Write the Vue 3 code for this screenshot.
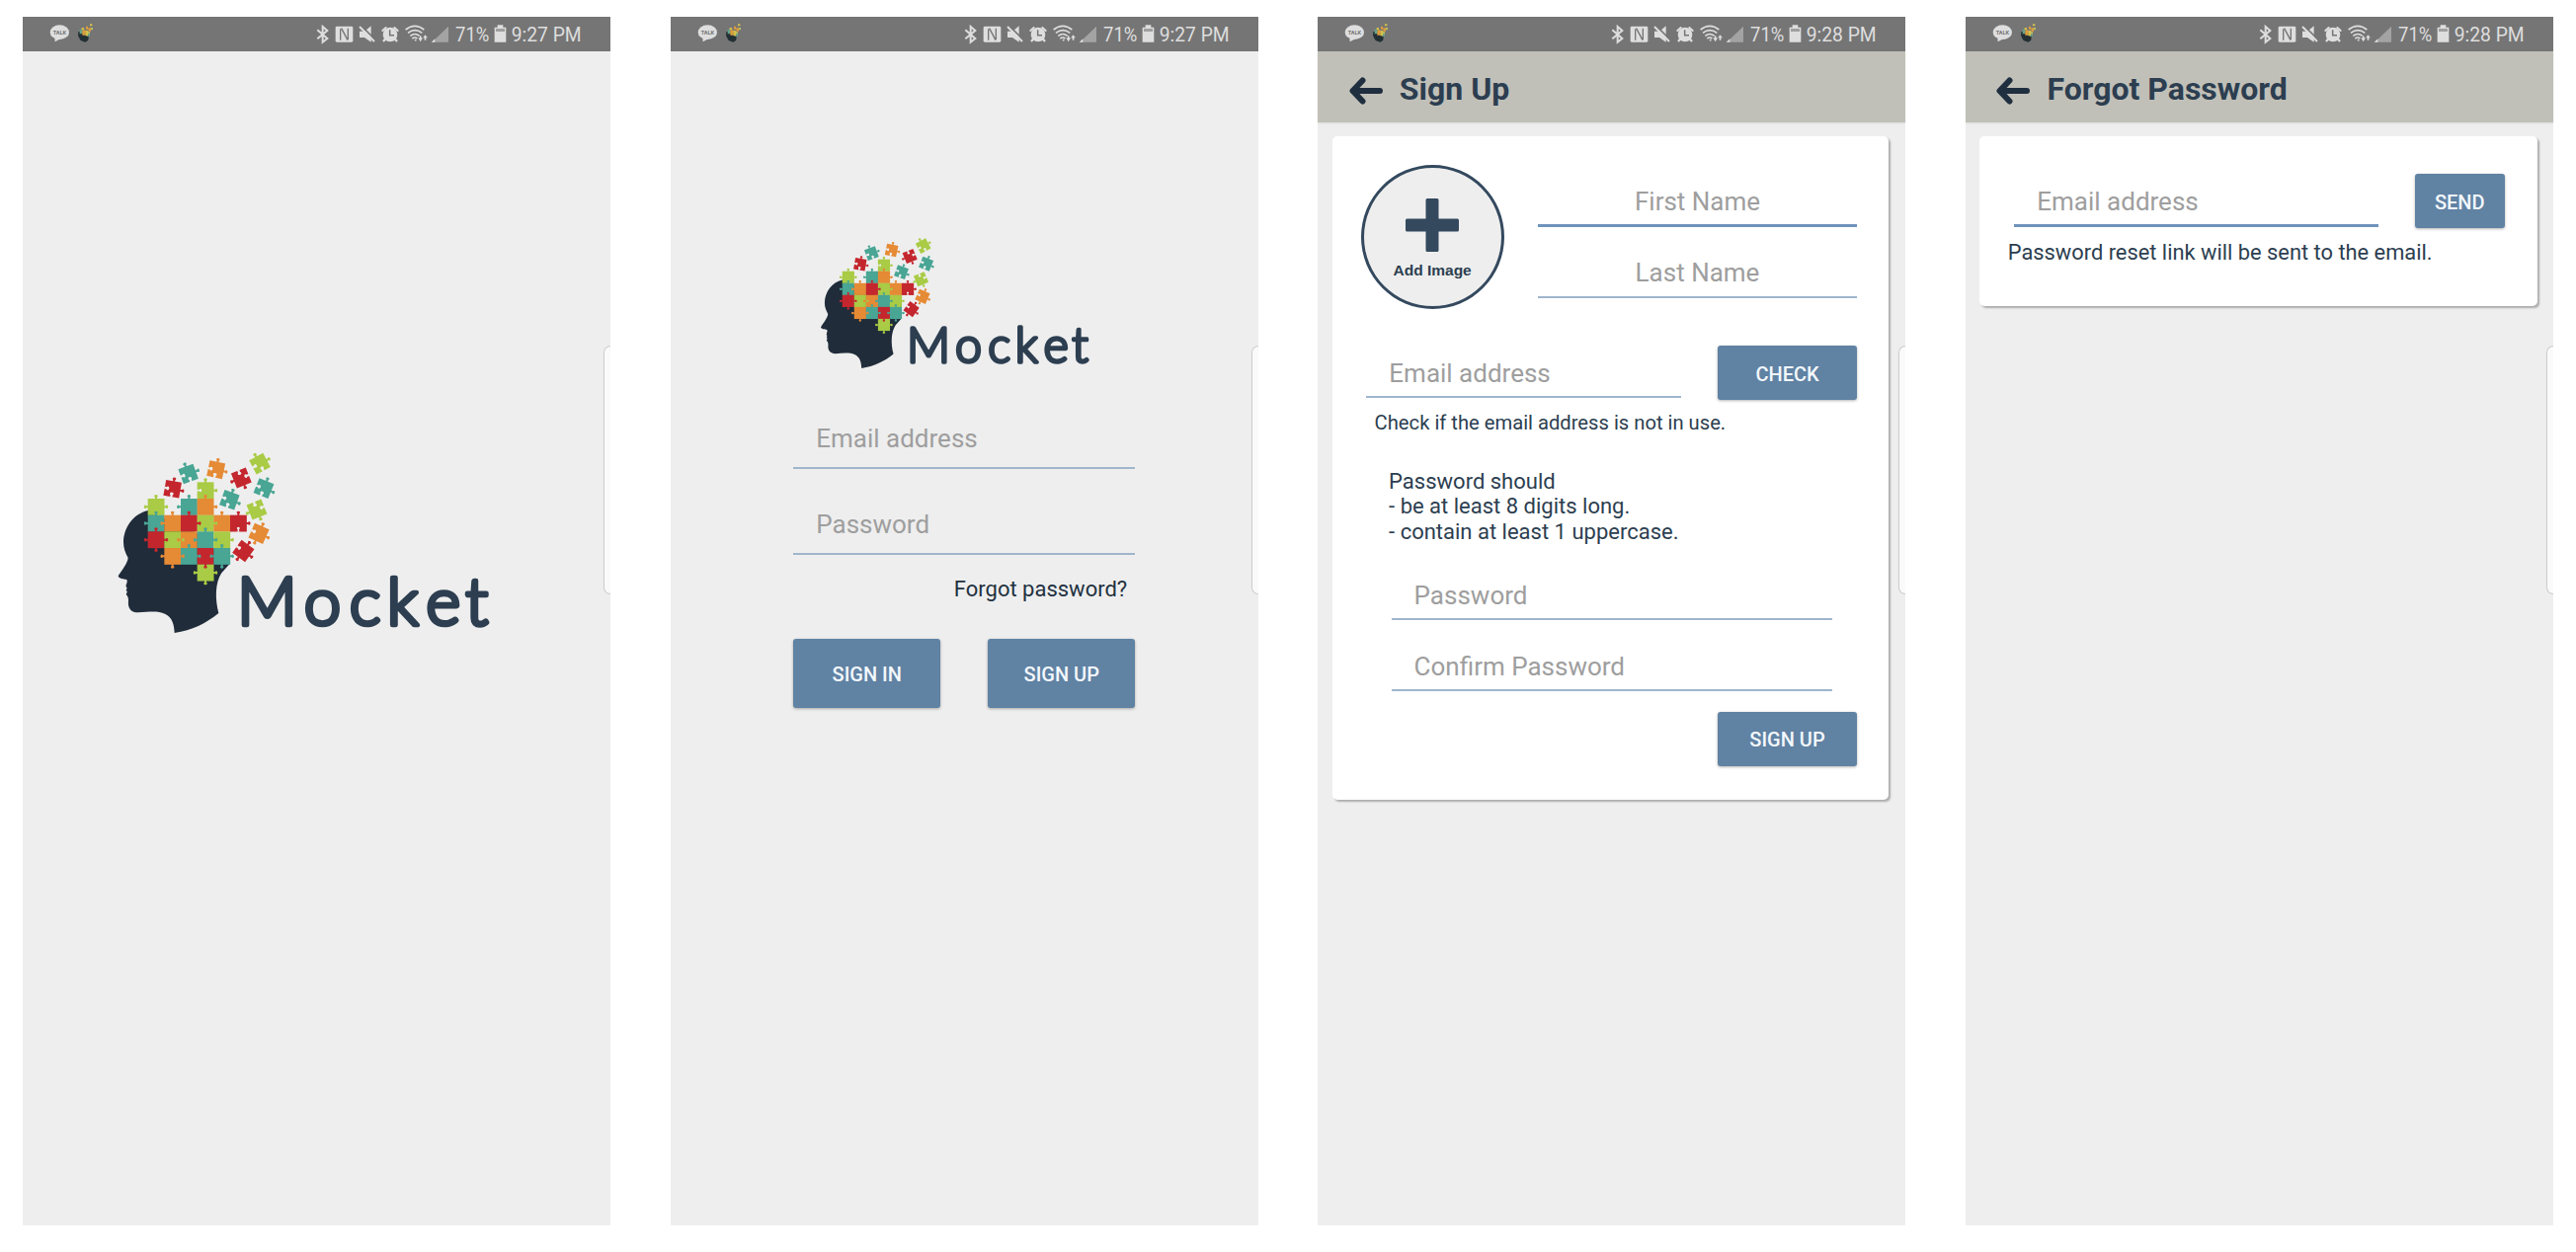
<script setup>
const screens = [
  { id: 'splash', time: '9:27 PM', logo: true },
  { id: 'login', time: '9:27 PM', logo: true },
  { id: 'signup', time: '9:28 PM', title: 'Sign Up' },
  { id: 'forgot', time: '9:28 PM', title: 'Forgot Password' },
]

const T = '#49a594', O = '#e58a35', R = '#c4262e', L = '#a9cb45'

// Interlocked pieces: column, row, colour, sides that carry a knob
const grid = [
  [3, 0, L, 'UR'],
  [0, 1, L, 'ULR'], [2, 1, T, 'UL'], [3, 1, O, 'UR'],
  [0, 2, T, 'UL'], [1, 2, O, 'UL'], [2, 2, R, 'UR'], [3, 2, L, 'R'], [4, 2, O, 'U'], [5, 2, R, 'UR'],
  [0, 3, R, 'ULRD'], [1, 3, L, 'R'], [2, 3, O, 'L'], [3, 3, T, 'ULR'], [4, 3, L, 'R'],
  [1, 4, O, 'LRD'], [2, 4, T, 'UR'], [3, 4, R, 'D'], [4, 4, T, 'ULRD'],
  [3, 5, L, 'LRD'],
]

// Scattered pieces: centre, rotation, colour, knobs; the other sides are notched
const loose = [
  [271, 119, -20, T, 'UR'], [355, 106, 12, O, 'UR'], [432, 131, -22, R, 'LD'],
  [488, 88, -28, L, 'UR'], [223, 165, 10, R, 'UR'], [500, 163, 22, T, 'UR'],
  [396, 198, 20, T, 'UR'], [479, 227, -22, L, 'LD'], [485, 300, 24, O, 'URD'],
  [438, 353, 36, R, 'URD'],
]

const turn = { U: 0, R: 90, D: 180, L: 270 }
const notches = (k) => ['U', 'R', 'D', 'L'].filter((d) => !k.includes(d))
</script>

<template>
  <main class="board">
    <section v-for="s in screens" :key="s.id" class="phone" :class="s.id">
      <svg class="status" width="595" height="35" viewBox="0 0 595 35">
        <g transform="translate(-3 -7) scale(.33333)">
          <ellipse cx="121" cy="68" rx="29" ry="22" fill="#dedede" />
          <path d="M106 84 L107 97 L124 88Z" fill="#dedede" />
          <text x="101" y="75" font-size="17" font-weight="700" fill="#757575" textLength="40" lengthAdjust="spacingAndGlyphs">TALK</text>
          <path d="M178 66 Q175 78 181 86 L185 93 L199 98 L208 92 L209 80 L198 68Z" fill="#222f35" />
          <path d="M182 59h9v14h-9zM204 73h9v7h-9z" fill="#66a287" />
          <path d="M190 61h9v16h-9zM208 55h8v10h-8zM201 50h6v9h-6z" fill="#dc9c3c" />
          <path d="M199 63h8v16h-8zM188 54h7v6h-7zM213 43h7v6h-7z" fill="#d7c04a" />
          <path d="M216 54h6v7h-6zM207 66h6v7h-6z" fill="#b7bd62" />
        </g>
        <g transform="translate(277 -7) scale(.33333)" fill="#dedede">
          <path d="M64 61 L94 87 L80 98 V51 L94 63 L64 88" fill="none" stroke="#dedede" stroke-width="6" />
          <rect x="119" y="50" width="53" height="48" rx="4" />
          <path d="M134 92 V58 M137 56 L156 92 M157 90 V56" fill="none" stroke="#757575" stroke-width="4" />
          <path d="M192 65 H207 L227 49 V98 L207 84 H192Z" />
          <path d="M196 47 L240 91" stroke="#757575" stroke-width="5" />
          <path d="M192 51 L237 96" stroke="#dedede" stroke-width="6" />
          <circle cx="285" cy="75" r="22" />
          <path d="M262 63 L272 54M298 54 L308 63" stroke="#dedede" stroke-width="6" stroke-linecap="round" />
          <path d="M271 88 L264 96M299 88 L306 96" stroke="#dedede" stroke-width="7" />
          <path d="M284 61 V77 H297" fill="none" stroke="#757575" stroke-width="4.5" />
          <g fill="none" stroke="#dedede" stroke-width="5">
            <path d="M332 60 Q360 38 388 60" />
            <path d="M339 70 Q360 54 382 70" />
            <path d="M346 79 Q360 68 374 79" />
            <path d="M352 87 Q360 81 367 87" />
          </g>
          <path d="M370 85h5v-6h4v6h5l-7 12zM385 85l6-9 8 9h-5v7h-5v-7zM358 92l6-4v8z" />
          <path d="M462 50 V98 H412Z" fill="#a3a3a3" />
          <path d="M410 98 L421 88 V98Z" />
          <text x="483" y="97" font-size="63" textLength="103" lengthAdjust="spacingAndGlyphs">71%</text>
          <path d="M611 46h17v7h9v45h-35v-45h9z" />
          <path d="M606 57h27v9h-27z" fill="#a0a0a0" />
          <text x="653" y="97" font-size="63" textLength="213" lengthAdjust="spacingAndGlyphs">{{ s.time }}</text>
        </g>
      </svg>

      <svg v-if="s.logo" class="logo" viewBox="50 50 1140 560">
        <path
          fill="#202c3a"
          d="M148 230 C105 240 75 280 74 326 C74 345 80 358 88 374 C86 392 68 412 58 429 C60 438 74 438 84 440 C88 448 80 456 82 462 C87 465 83 469 82 473 C88 476 84 480 82 485 C92 495 88 505 89 517 C92 534 104 540 118 540 C150 538 180 534 200 544 C222 555 228 575 229 602 C282 594 325 573 363 542 C352 500 352 450 372 420 L397 392 L300 300Z"
        />
        <g transform="translate(148 144)">
          <rect v-for="(p, i) in grid" :key="'b' + i" :x="p[0] * 50" :y="p[1] * 50" width="50.5" height="50.5" :fill="p[2]" />
          <template v-for="(p, i) in grid" :key="'k' + i">
            <g v-for="d in p[3]" :key="d" :fill="p[2]" :transform="`translate(${p[0] * 50 + 25} ${p[1] * 50 + 25}) rotate(${turn[d]})`">
              <path d="M-3 -23 L-3 -29 Q-6 -31 -5 -35 Q0 -39 5 -35 Q6 -31 3 -29 L3 -23Z" />
            </g>
          </template>
          <path fill="#eee" d="M272 151 L273 144 Q269 141 271 138 Q275 134 279 138 Q281 141 277 144 L278 151Z" />
          <path fill="#eee" d="M149 22 L156 23 Q159 19 162 21 Q166 25 162 29 Q159 31 156 27 L149 28Z" />
        </g>
        <g v-for="(p, i) in loose" :key="'l' + i" :transform="`translate(${p[0]} ${p[1]}) rotate(${p[2]})`">
          <rect x="-24" y="-24" width="48" height="48" :fill="p[3]" />
          <path v-for="d in p[4]" :key="d" :fill="p[3]" :transform="`rotate(${turn[d]})`" d="M-3 -22 L-3 -28 Q-6 -30 -5 -34 Q0 -38 5 -34 Q6 -30 3 -28 L3 -22Z" />
          <path v-for="d in notches(p[4])" :key="'n' + d" fill="#efefef" :transform="`rotate(${turn[d]})`" d="M-4 -25 L-3 -19 Q-7 -16 -5 -12 Q0 -8 5 -12 Q7 -16 3 -19 L4 -25Z" />
        </g>
        <text class="word" x="419 622 760 874 993 1113" y="578.5">Mocket</text>
      </svg>

      <form v-if="s.id === 'login'" class="login-form">
        <div class="field">Email address</div>
        <div class="field">Password</div>
        <a class="link">Forgot password?</a>
        <div class="buttons">
          <span class="btn">SIGN IN</span>
          <span class="btn">SIGN UP</span>
        </div>
      </form>

      <header v-if="s.title" class="toolbar">
        <svg width="34" height="28" viewBox="0 0 34 28">
          <path d="M13.500 3.500 L3.500 14 L13.500 24.500M4 14 H31" fill="none" stroke="#202f3f" stroke-width="6" stroke-linecap="round" stroke-linejoin="round" />
        </svg>
        <h1>{{ s.title }}</h1>
      </header>

      <form v-if="s.id === 'signup'" class="card">
        <div class="profile">
          <div class="avatar">
            <svg width="54" height="54" viewBox="0 0 54 54">
              <path d="M22 0h10a1.5 1.5 0 0 1 1.500 1.500V20.500H52.500A1.500 1.500 0 0 1 54 22V32a1.500 1.500 0 0 1-1.500 1.500H33.500V52.500A1.500 1.500 0 0 1 32 54H22a1.500 1.500 0 0 1-1.500-1.500V33.500H1.500A1.500 1.500 0 0 1 0 32V22a1.500 1.500 0 0 1 1.500-1.500H20.500V1.500A1.500 1.500 0 0 1 22 0z" fill="#34495e" />
            </svg>
            <span>Add Image</span>
          </div>
          <div class="names">
            <div class="field center active">First Name</div>
            <div class="field center">Last Name</div>
          </div>
        </div>
        <div class="email-row">
          <div class="field low">Email address</div>
          <span class="btn">CHECK</span>
        </div>
        <p class="hint">Check if the email address is not in use.</p>
        <p class="rules">Password should<br />- be at least 8 digits long.<br />- contain at least 1 uppercase.</p>
        <div class="passwords">
          <div class="field low">Password</div>
          <div class="field low">Confirm Password</div>
        </div>
        <span class="btn submit">SIGN UP</span>
      </form>

      <form v-if="s.id === 'forgot'" class="card">
        <div class="email-row">
          <div class="field active">Email address</div>
          <span class="btn">SEND</span>
        </div>
        <p class="hint">Password reset link will be sent to the email.</p>
      </form>

      <i class="edge"></i>
    </section>
  </main>
</template>

<style>
body {
  margin: 0;
  background: #fff;
}
</style>

<style scoped>
.board {
  display: flex;
  gap: 60.67px;
  box-sizing: border-box;
  width: 2608px;
  height: 1268px;
  padding: 17px 0 0 23px;
  overflow: hidden;
  background: #fff;
  font-family: Roboto, sans-serif;
  color: #2c3e50;
}
.phone {
  position: relative;
  flex: none;
  width: 595px;
  height: 1224px;
  background: #eee;
}
.status {
  display: block;
  background: #757575;
  font-family: Roboto, sans-serif;
}
.logo {
  display: block;
  overflow: visible;
}
.splash .logo {
  width: 380px;
  height: 186.7px;
  margin: 404.7px 0 0 93.7px;
}
.login .logo {
  width: 275px;
  height: 135px;
  margin: 188px 0 0 150.3px;
}
.word {
  font: 300 201px Lato, sans-serif;
  fill: #2c3e50;
  stroke: #2c3e50;
  stroke-width: 14px;
  stroke-linejoin: round;
}
.edge {
  position: absolute;
  top: 333px;
  right: 0;
  width: 6px;
  height: 250px;
  border: 1px solid #ccc;
  border-right: 0;
  border-radius: 7px 0 0 7px;
  background: #fafafa;
}
.field {
  box-sizing: border-box;
  height: 47px;
  padding-left: 23px;
  border-bottom: 2px solid #9fb6cc;
  font-size: 26px;
  line-height: 30px;
  color: #9e9e9e;
  white-space: nowrap;
}
.low,
.login-form .field {
  padding-top: 1px;
}
.center {
  padding-left: 0;
  text-align: center;
}
.active {
  border-bottom: 3px solid #6f93bb;
}
.btn {
  display: flex;
  align-items: center;
  justify-content: center;
  box-sizing: border-box;
  padding-top: 2px;
  border-radius: 3px;
  background: #6082a3;
  box-shadow: 0 1px 3px rgba(0, 0, 0, 0.3);
  color: #f3f8fc;
  font-size: 20px;
  font-weight: 500;
}
.login-form {
  display: flex;
  flex-direction: column;
  gap: 40px;
  width: 346px;
  margin: 53px 0 0 124.6px;
}
.link {
  align-self: flex-end;
  margin: -18px 8px 0 0;
  font-size: 22px;
  line-height: 26px;
  color: #22313f;
}
.buttons {
  display: flex;
  justify-content: space-between;
  margin-top: -3px;
}
.buttons .btn {
  width: 149px;
  height: 70px;
}
.toolbar {
  display: flex;
  align-items: center;
  gap: 17px;
  height: 72px;
  padding-left: 31.500px;
  background: #c1c0b8;
  box-shadow: 0 1px 2px rgba(0, 0, 0, 0.08);
}
.toolbar svg {
  margin-top: 7px;
}
h1 {
  margin: 3px 0 0;
  font-size: 32px;
  font-weight: 700;
  line-height: 40px;
  white-space: nowrap;
  color: #2c3e50;
}
.card {
  display: flex;
  flex-direction: column;
  box-sizing: border-box;
  width: 563px;
  margin: 14px 0 0 14.300px;
  border-radius: 5px;
  background: #fff;
  box-shadow: 2px 2px 2px rgba(0, 0, 0, 0.28);
}
.signup .card {
  height: 672px;
  padding: 29px 31.600px 0 29px;
}
.profile {
  display: flex;
  justify-content: space-between;
}
.avatar {
  display: flex;
  flex-direction: column;
  align-items: center;
  box-sizing: border-box;
  width: 145px;
  height: 146px;
  padding-top: 31px;
  border: 3px solid #34495e;
  border-radius: 50%;
  background: #eee;
  font: 700 15.500px/20px 'Liberation Sans', sans-serif;
}
.avatar span {
  margin-top: 9px;
}
.names {
  display: flex;
  flex-direction: column;
  gap: 31px;
  width: 323px;
  padding-top: 22px;
}
.names .field,
.email-row .field,
.passwords .field {
  height: 41px;
}
.email-row {
  display: flex;
  justify-content: space-between;
}
.signup .email-row {
  margin: 37px 0 0 5.700px;
}
.signup .email-row .field {
  width: 318.700px;
  margin-top: 12px;
}
.signup .btn {
  width: 141px;
  height: 55px;
}
p {
  margin: 0;
  white-space: nowrap;
  color: #2c3e50;
}
.signup .hint {
  margin: 10px 0 0 14px;
  font-size: 20.200px;
  line-height: 26px;
}
.rules {
  margin: 33.500px 0 0 28.500px;
  font-size: 22px;
  line-height: 25.700px;
}
.passwords {
  display: flex;
  flex-direction: column;
  gap: 31.300px;
  width: 446px;
  margin: 35.400px 0 0 31px;
}
.submit {
  align-self: flex-end;
  margin-top: 20.500px;
}
.forgot .card {
  width: 564.500px;
  height: 172px;
  padding: 38px 33px 0 35px;
}
.forgot .field {
  width: 369px;
  margin-top: 13px;
}
.forgot .btn {
  width: 91px;
  height: 55px;
}
.forgot .hint {
  margin: 12px 0 0 -6.500px;
  font-size: 21.850px;
  line-height: 26px;
}
</style>
